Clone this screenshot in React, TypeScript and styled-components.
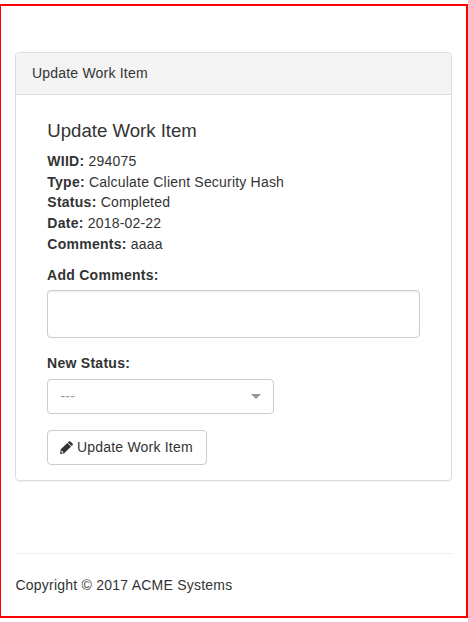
import React from 'react';
import styled, { createGlobalStyle } from 'styled-components';

const GlobalStyle = createGlobalStyle`
  *, *::before, *::after { box-sizing: border-box; }
  body {
    margin: 0;
    background: #fff;
    color: #333;
    font-family: "Liberation Sans", Arial, Helvetica, sans-serif;
    font-size: 14px;
    line-height: 20px;
    letter-spacing: 0.2px;
  }
`;

const Page = styled.div`
  width: 468px;
  height: 614px;
  margin-top: 4px;
  padding: 46px 14px 0 14px;
  border: 2px solid #f00;
  border-left-width: 1px;
`;

const Panel = styled.section`
  height: 429px;
  border: 1px solid #ddd;
  border-radius: 4px;
  box-shadow: 0 1px 1px rgba(0, 0, 0, 0.05);
`;

const PanelHeader = styled.header`
  height: 42px;
  padding: 10px 16px;
  border-bottom: 1px solid #ddd;
  border-radius: 3px 3px 0 0;
  background: #f4f4f4;
`;

const PanelBody = styled.form`
  padding: 25px 31px 0;
`;

const Title = styled.h4`
  margin: 0 0 9px;
  padding-left: 0.3px;
  font-size: 18.6px;
  font-weight: 400;
  line-height: 22px;
  letter-spacing: 0;
`;

const Details = styled.dl`
  margin: 0;
`;

const Detail = styled.div`
  height: 20.7px;
  padding-left: 0.3px;
  line-height: 20px;
`;

const Term = styled.dt`
  display: inline;
  font-weight: 700;
  letter-spacing: 0.26px;
`;

const Value = styled.dd`
  display: inline;
  margin: 0;
`;

const Label = styled.label<{ $top: number; $bottom: number }>`
  display: block;
  margin: ${({ $top }) => $top}px 0 ${({ $bottom }) => $bottom}px;
  font-weight: 700;
  letter-spacing: 0.28px;
`;

const CommentBox = styled.textarea`
  display: block;
  width: 373px;
  height: 48px;
  padding: 6px 12px;
  border: 1px solid #ccc;
  border-radius: 4px;
  outline: none;
  resize: none;
  font: inherit;
  box-shadow: inset 0 1px 1px rgba(0, 0, 0, 0.075);
`;

const Control = styled.button`
  display: flex;
  align-items: center;
  height: 35px;
  padding: 0 12px 0 12.5px;
  border: 1px solid #ccc;
  border-radius: 4px;
  background: #fff;
  color: #333;
  font: inherit;
  letter-spacing: inherit;
`;

const StatusSelect = styled(Control)`
  justify-content: space-between;
  width: 227px;
  color: #999;
`;

const SubmitButton = styled(Control)`
  gap: 4px;
  width: 160px;
  margin-top: 16px;
  white-space: nowrap;
`;

const Caret = styled.span`
  border: solid transparent;
  border-width: 5px 5px 0;
  border-top-color: #999;
`;

const Footer = styled.footer`
  margin-top: 72px;
  padding: 21px 0 0 0.5px;
  border-top: 1px solid #eee;
  letter-spacing: 0.23px;
`;

const details = [
  ['WIID:', '294075'],
  ['Type:', 'Calculate Client Security Hash'],
  ['Status:', 'Completed'],
  ['Date:', '2018-02-22'],
  ['Comments:', 'aaaa'],
];

const PencilSvg = styled.svg`
  flex: none;
  margin-left: -0.5px;
`;

function PencilIcon() {
  return (
    <PencilSvg width="13" height="13" viewBox="0 0 13 13" fill="currentColor" aria-hidden="true">
      <path
        fillRule="evenodd"
        d="M7.3 1.9 11.1 5.6 4.2 12.2 0 13 .8 8.3ZM1.7 9.4 1.2 11 2.1 11.8 3.6 11.3Z"
      />
      <path d="M7.8 1.4 8.8.5Q9.7-.2 10.5.5L12.5 2.5Q13.2 3.4 12.5 4.2L11.6 5.1Z" />
    </PencilSvg>
  );
}

export default function App() {
  return (
    <>
      <GlobalStyle />
      <Page>
        <Panel>
          <PanelHeader>Update Work Item</PanelHeader>
          <PanelBody onSubmit={(e) => e.preventDefault()}>
            <Title>Update Work Item</Title>
            <Details>
              {details.map(([term, value]) => (
                <Detail key={term}>
                  <Term>{term}</Term> <Value>{value}</Value>
                </Detail>
              ))}
            </Details>
            <Label $top={10.5} $bottom={5} htmlFor="comments">Add Comments:</Label>
            <CommentBox id="comments" />
            <Label $top={15} $bottom={6} htmlFor="status">New Status:</Label>
            <StatusSelect id="status" type="button">
              ---
              <Caret />
            </StatusSelect>
            <SubmitButton type="submit">
              <PencilIcon />
              Update Work Item
            </SubmitButton>
          </PanelBody>
        </Panel>
        <Footer>Copyright © 2017 ACME Systems</Footer>
      </Page>
    </>
  );
}
